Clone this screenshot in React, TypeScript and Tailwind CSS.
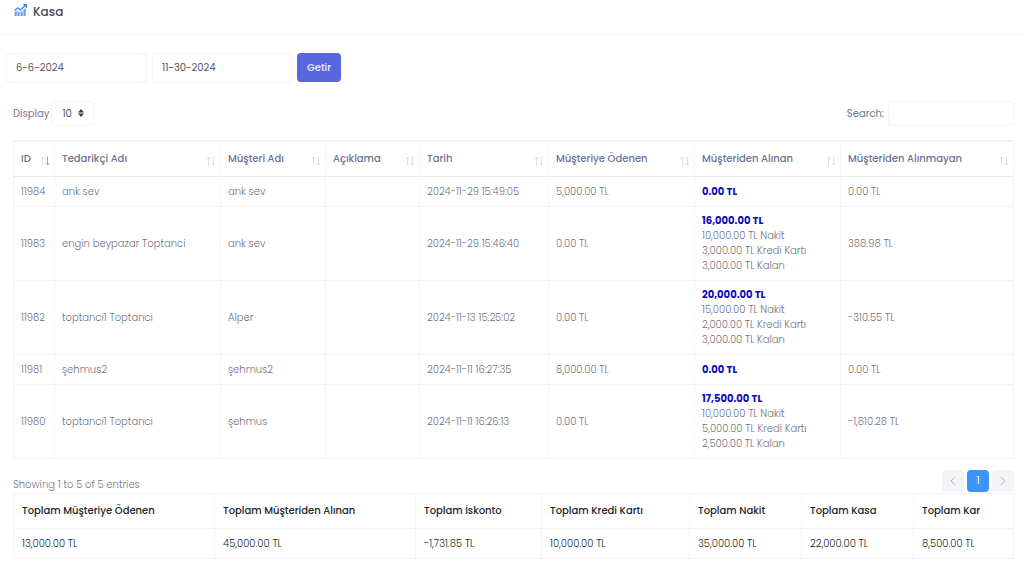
import { useState } from "react";
import clsx from "clsx";

type Entry = {
  id: number;
  supplier: string;
  customer: string;
  note: string;
  date: string;
  paid: string;
  received: string;
  details: string[];
  unpaid: string;
};

const columns = [
  { title: "ID", width: "w-[4.1%]" },
  { title: "Tedarikçi Adı", width: "w-[16.6%]" },
  { title: "Müşteri Adı", width: "w-[10.5%]" },
  { title: "Açıklama", width: "w-[9.4%]" },
  { title: "Tarih", width: "w-[12.9%]" },
  { title: "Müşteriye Ödenen", width: "w-[14.6%]" },
  { title: "Müşteriden Alınan", width: "w-[14.6%]" },
  { title: "Müşteriden Alınmayan", width: "w-[17.3%]" },
];

const entries: Entry[] = [
  {
    id: 11984,
    supplier: "ank sev",
    customer: "ank sev",
    note: "",
    date: "2024-11-29 15:49:05",
    paid: "5,000.00 TL",
    received: "0.00 TL",
    details: [],
    unpaid: "0.00 TL",
  },
  {
    id: 11983,
    supplier: "engin beypazar Toptanci",
    customer: "ank sev",
    note: "",
    date: "2024-11-29 15:46:40",
    paid: "0.00 TL",
    received: "16,000.00 TL",
    details: ["10,000.00 TL Nakit", "3,000.00 TL Kredi Kartı", "3,000.00 TL Kalan"],
    unpaid: "388.98 TL",
  },
  {
    id: 11982,
    supplier: "toptanci1 Toptanci",
    customer: "Alper",
    note: "",
    date: "2024-11-13 15:25:02",
    paid: "0.00 TL",
    received: "20,000.00 TL",
    details: ["15,000.00 TL Nakit", "2,000.00 TL Kredi Kartı", "3,000.00 TL Kalan"],
    unpaid: "-310.55 TL",
  },
  {
    id: 11981,
    supplier: "şehmus2",
    customer: "şehmus2",
    note: "",
    date: "2024-11-11 16:27:35",
    paid: "8,000.00 TL",
    received: "0.00 TL",
    details: [],
    unpaid: "0.00 TL",
  },
  {
    id: 11980,
    supplier: "toptanci1 Toptanci",
    customer: "şehmus",
    note: "",
    date: "2024-11-11 16:26:13",
    paid: "0.00 TL",
    received: "17,500.00 TL",
    details: ["10,000.00 TL Nakit", "5,000.00 TL Kredi Kartı", "2,500.00 TL Kalan"],
    unpaid: "-1,810.28 TL",
  },
];

const totals = [
  { title: "Toplam Müşteriye Ödenen", value: "13,000.00 TL", width: "w-[20.1%]" },
  { title: "Toplam Müşteriden Alınan", value: "45,000.00 TL", width: "w-[20.1%]" },
  { title: "Toplam İskonto", value: "-1,731.85 TL", width: "w-[12.6%]" },
  { title: "Toplam Kredi Kartı", value: "10,000.00 TL", width: "w-[14.8%]" },
  { title: "Toplam Nakit", value: "35,000.00 TL", width: "w-[11.2%]" },
  { title: "Toplam Kasa", value: "22,000.00 TL", width: "w-[11.2%]" },
  { title: "Toplam Kar", value: "8,500.00 TL", width: "w-[10%]" },
];

function ChartIcon() {
  return (
    <svg viewBox="0 0 24 22" className="h-3 w-[13px]" fill="#5fa0f0">
      <path d="M1 15l4-3v10H1zM6.500 13l4 3v6h-4zM12 16l4-4v10h-4zM17.500 11l4-4v15h-4z" />
      <path d="M1 12l6-5 5 4 8-8" fill="none" stroke="#3f8ae8" strokeWidth="2.500" />
      <path d="M16 0h8v8z" fill="#3f8ae8" />
    </svg>
  );
}

function SortIcon({ active }: { active: boolean }) {
  return (
    <svg viewBox="0 0 10 10" className="mt-1 h-[10px] w-[10px] shrink-0" fill="none">
      <path d="M2.500 9.500V1M.5 3l2-2 2 2" stroke="#dedfe6" />
      <path d="M7.500 .5V9M5.500 7l2 2 2-2" stroke={active ? "#a5a7b8" : "#dedfe6"} />
    </svg>
  );
}

function Chevron({ d }: { d: string }) {
  return (
    <svg viewBox="0 0 10 10" className="h-[10px] w-[10px]" fill="none" stroke="#b4b6c6">
      <path d={d} />
    </svg>
  );
}

export default function App() {
  const [from, setFrom] = useState("6-6-2024");
  const [to, setTo] = useState("11-30-2024");
  const [search, setSearch] = useState("");

  const rows = entries.filter((e) =>
    Object.values(e).join(" ").toLowerCase().includes(search.toLowerCase())
  );

  return (
    <div className="min-h-screen bg-white font-['Poppins','Inter',sans-serif] text-[10px] leading-[15px] text-[#74788d]">
      <header className="flex h-[35px] items-start gap-[6px] border-b border-[#f3f3f6] px-[14px] pt-1">
        <ChartIcon />
        <h1 className="text-xs leading-[15px] font-medium text-[#4a4b5c]">Kasa</h1>
      </header>

      {/* Date filter */}
      <form
        className="flex gap-[5px] px-[6px] pt-[18px]"
        onSubmit={(e) => e.preventDefault()}
      >
        <input
          aria-label="Başlangıç tarihi"
          className="h-[30px] w-[141px] rounded-sm border border-[#f3f3f6] px-[9px] text-[#575962] outline-none"
          value={from}
          onChange={(e) => setFrom(e.target.value)}
        />
        <input
          aria-label="Bitiş tarihi"
          className="h-[30px] w-[140px] rounded-sm border border-[#f3f3f6] px-[9px] text-[#575962] outline-none"
          value={to}
          onChange={(e) => setTo(e.target.value)}
        />
        <button
          type="submit"
          className="h-[29px] rounded-sm bg-[#5867dd] px-[10px] pb-px font-medium text-[#eef0fc]"
        >
          Getir
        </button>
      </form>

      <main className="px-[10px] pt-[18px] sm:pl-[13px]">
        <div className="flex items-center justify-between">
          <label className="flex items-center gap-[2px]">
            Display
            <span className="relative">
              <select className="h-[25px] w-[43px] appearance-none rounded-sm border border-[#f3f3f6] bg-white pl-[10px] text-[#575962] outline-none">
                <option>10</option>
                <option>25</option>
                <option>50</option>
              </select>
              <svg
                viewBox="0 0 6 8"
                className="pointer-events-none absolute top-2 right-[10px] h-2 w-[6px]"
                fill="#343a40"
              >
                <path d="M3 0l3 3.500H0zM0 4.500h6L3 8z" />
              </svg>
            </span>
          </label>
          <label className="flex items-center gap-1">
            Search:
            <input
              type="search"
              className="h-[25px] w-[126px] rounded-sm border border-[#f3f3f6] px-2 outline-none"
              value={search}
              onChange={(e) => setSearch(e.target.value)}
            />
          </label>
        </div>

        <table className="mt-[14px] w-full table-fixed border-collapse text-left">
          <thead>
            <tr className="h-[35px] border border-t-2 border-[#f3f3f6] border-b-[#e9eaef]">
              {columns.map((c, i) => (
                <th
                  key={c.title}
                  className={clsx(c.width, "border-x border-[#f3f3f6] pr-1 pl-[7px] font-medium")}
                >
                  <button className="flex w-full items-center justify-between whitespace-nowrap text-[#6c7293]">
                    {c.title}
                    <SortIcon active={i === 0} />
                  </button>
                </th>
              ))}
            </tr>
          </thead>
          <tbody className="font-light text-[#6f7280]">
            {rows.map((e) => (
              <tr
                key={e.id}
                className={clsx(
                  "border border-[#f3f3f6] *:border-x *:border-[#f3f3f6] *:px-[7px]",
                  e.details.length ? "h-[74px]" : "h-[30px]"
                )}
              >
                <td>{e.id}</td>
                <td>{e.supplier}</td>
                <td>{e.customer}</td>
                <td>{e.note}</td>
                <td>{e.date}</td>
                <td>{e.paid}</td>
                <td>
                  <b className="font-bold text-[#0e0bb8]">{e.received}</b>
                  {e.details.map((d) => (
                    <div key={d}>{d}</div>
                  ))}
                </td>
                <td>{e.unpaid}</td>
              </tr>
            ))}
          </tbody>
        </table>

        <div className="flex items-end justify-between pt-[11px]">
          <p className="font-light">
            Showing 1 to {rows.length} of {entries.length} entries
          </p>
          <nav className="flex gap-[3px]">
            <button
              aria-label="Previous"
              className="flex h-[22px] w-[22px] items-center justify-center rounded-sm bg-[#f3f3f8]"
            >
              <Chevron d="M7 1L3 5l4 4" />
            </button>
            <button className="h-[22px] w-[22px] rounded-sm bg-[#3d94fb] text-white">1</button>
            <button
              aria-label="Next"
              className="flex h-[22px] w-[22px] items-center justify-center rounded-sm bg-[#f3f3f8]"
            >
              <Chevron d="M3 1l4 4-4 4" />
            </button>
          </nav>
        </div>

        {/* Totals */}
        <table className="mt-px w-full table-fixed border-collapse text-left whitespace-nowrap text-[#212529]">
          <thead>
            <tr className="h-[35px] border border-[#f3f3f6]">
              {totals.map((t) => (
                <th
                  key={t.title}
                  className={clsx(t.width, "border-x border-[#f3f3f6] px-2 font-medium")}
                >
                  {t.title}
                </th>
              ))}
            </tr>
          </thead>
          <tbody>
            <tr className="h-[30px] border border-[#f3f3f6] font-light">
              {totals.map((t) => (
                <td key={t.title} className="border-x border-[#f3f3f6] px-2">
                  {t.value}
                </td>
              ))}
            </tr>
          </tbody>
        </table>
      </main>
    </div>
  );
}
